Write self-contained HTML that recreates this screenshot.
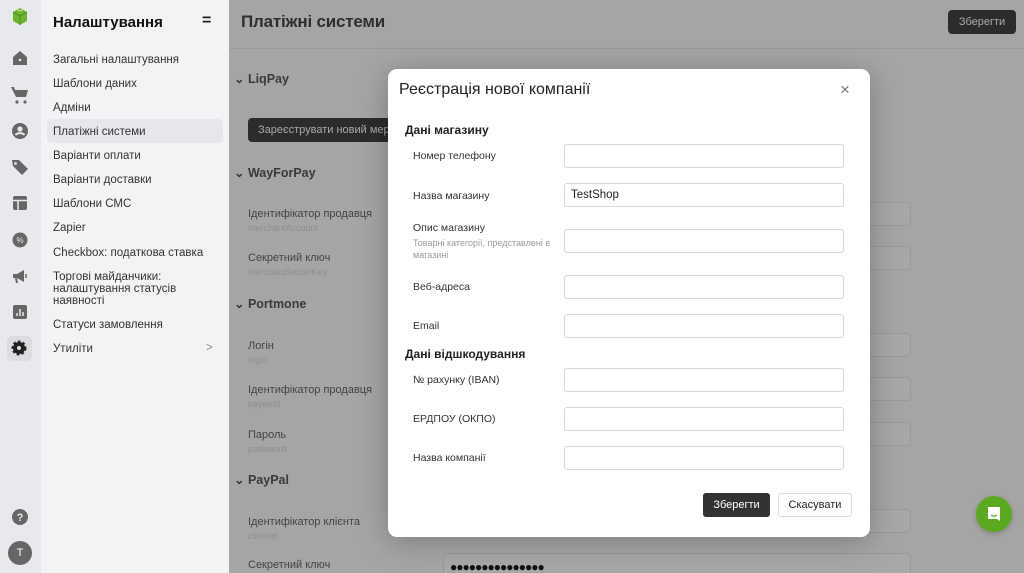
<!DOCTYPE html>
<html><head><meta charset="utf-8"><style>
*{box-sizing:border-box;margin:0;padding:0}
html,body{width:1024px;height:573px;overflow:hidden}
body{font-family:"Liberation Sans",sans-serif;position:relative;background:#a6a6a6;color:#222}
.rail{position:absolute;left:0;top:0;width:41px;height:573px;background:#e8e9ec}
.ic{position:absolute;left:9px;width:22px;height:22px;display:flex;align-items:center;justify-content:center}
.side{position:absolute;left:41px;top:0;width:188px;height:573px;background:#f2f3f5}
.side h1{position:absolute;left:12px;top:14px;font-size:15px;font-weight:bold;color:#111}
.side .eq{position:absolute;left:161px;top:12px;font-size:16px;font-weight:bold}
.it{position:absolute;left:12px;font-size:11.5px;color:#333;line-height:12px}
.sel{position:absolute;left:6px;top:119px;width:176px;height:24px;background:#e6e7ea;border-radius:5px}
.main{position:absolute;left:229px;top:0;width:795px;height:573px;background:#a5a5a5;overflow:hidden}
.t{position:absolute;font-size:11px;color:#444}
.s{position:absolute;font-size:9px;color:#8e8e8e}
.h{position:absolute;font-size:12.5px;font-weight:bold;color:#3a3a3a}
.bi{position:absolute;border:1px solid #999;border-radius:4px;height:24px;background:#a7a7a7}
.modal{position:absolute;left:388px;top:69px;width:482px;height:468px;background:#fff;border-radius:9px;box-shadow:0 4px 30px rgba(0,0,0,.25)}
.ml{position:absolute;left:25px;font-size:10.5px;color:#333}
.mi{position:absolute;left:176px;width:280px;height:24px;border:1px solid #d8d8d8;border-radius:3px;font-size:11.5px;padding:5px 6px;color:#222}
.sec{position:absolute;left:17px;font-size:12px;font-weight:bold;color:#222}
</style></head><body>
<div class="rail">
<svg class="ic" style="top:5px" viewBox="0 0 22 22"><path d="M4 7l7-4 7 4v9l-7 4-7-4z" fill="#6fb532"/><path d="M4 7l7 4 7-4M11 11v9" stroke="#4c8a1f" fill="none"/><path d="M7 4l4 2 4-2" stroke="#c8e89a" fill="none"/></svg>
<svg class="ic" style="top:47px" viewBox="0 0 22 22"><path d="M4 10l7-6 7 6v8H4z" fill="#666"/><circle cx="11" cy="13" r="1.3" fill="#e8e9ec"/></svg>
<svg class="ic" style="top:84px" viewBox="0 0 22 22"><path d="M2 3h3l1 3h13l-2 7H7z" fill="#666"/><circle cx="8" cy="18" r="1.6" fill="#666"/><circle cx="16" cy="18" r="1.6" fill="#666"/></svg>
<svg class="ic" style="top:120px" viewBox="0 0 22 22"><circle cx="11" cy="11" r="8" fill="#666"/><circle cx="11" cy="9" r="2.6" fill="#e8e9ec"/><path d="M6.5 15c2-2.5 7-2.5 9 0" stroke="#e8e9ec" stroke-width="2" fill="none"/></svg>
<svg class="ic" style="top:156px" viewBox="0 0 22 22"><path d="M3 4h7l9 9-6 6-9-9z" fill="#666"/><circle cx="6.5" cy="7.5" r="1.4" fill="#e8e9ec"/></svg>
<svg class="ic" style="top:192px" viewBox="0 0 22 22"><rect x="4" y="4" width="14" height="14" rx="2" fill="#666"/><path d="M4 8.5h14M9 8.5v10" stroke="#e8e9ec" stroke-width="1.5"/></svg>
<svg class="ic" style="top:229px" viewBox="0 0 22 22"><circle cx="11" cy="11" r="7.5" fill="#666"/><text x="11" y="14" font-size="8" text-anchor="middle" fill="#e8e9ec" font-family="Liberation Sans">%</text></svg>
<svg class="ic" style="top:265px" viewBox="0 0 22 22"><path d="M4 9h4l7-4v12l-7-4H4z M6 13l1 5h2l-1-5" fill="#666"/><path d="M17 9v4" stroke="#666" stroke-width="1.5"/></svg>
<svg class="ic" style="top:301px" viewBox="0 0 22 22"><rect x="4" y="4" width="14" height="14" rx="2" fill="#666"/><path d="M8 15v-3M11 15V8M14 15v-4" stroke="#e8e9ec" stroke-width="1.5"/></svg>
<div style="position:absolute;left:7px;top:336px;width:25px;height:25px;background:#dcdde1;border-radius:5px"></div>
<svg class="ic" style="top:337px;left:8px" viewBox="0 0 22 22"><circle cx="11" cy="11" r="6" fill="#222" stroke="#222" stroke-width="3" stroke-dasharray="2.5 2"/><circle cx="11" cy="11" r="2" fill="#dcdde1"/></svg>
<svg class="ic" style="top:506px" viewBox="0 0 22 22"><circle cx="11" cy="11" r="8" fill="#666"/><text x="11" y="15" font-size="11" font-weight="bold" text-anchor="middle" fill="#e8e9ec" font-family="Liberation Sans">?</text></svg>
<div style="position:absolute;left:8px;top:541px;width:24px;height:24px;border-radius:50%;background:#666;color:#fff;font-size:11px;text-align:center;line-height:24px">T</div>
</div>
<div class="side">
<h1>Налаштування</h1><div class="eq">=</div>
<div class="sel"></div>
<div class="it" style="top:54px">Загальні налаштування</div>
<div class="it" style="top:78px">Шаблони даних</div>
<div class="it" style="top:102px">Адміни</div>
<div class="it" style="top:126px">Платіжні системи</div>
<div class="it" style="top:150px">Варіанти оплати</div>
<div class="it" style="top:174px">Варіанти доставки</div>
<div class="it" style="top:198px">Шаблони СМС</div>
<div class="it" style="top:222px">Zapier</div>
<div class="it" style="top:247px">Checkbox: податкова ставка</div>
<div class="it" style="top:271px">Торгові майданчики:<br>налаштування статусів<br>наявності</div>
<div class="it" style="top:319px">Статуси замовлення</div>
<div class="it" style="top:343px">Утиліти</div>
<div class="it" style="top:342px;left:165px;color:#888">&gt;</div>
</div>
<div class="main">
<div style="position:absolute;left:12px;top:12px;font-size:17px;color:#2e2e2e;font-weight:bold;letter-spacing:-0.2px">Платіжні системи</div>
<div style="position:absolute;left:719px;top:10px;width:68px;height:24px;background:#2c2c2c;border-radius:4px;color:#aaa;font-size:11px;text-align:center;line-height:24px">Зберегти</div>
<div style="position:absolute;left:0;top:48px;width:795px;height:1px;background:#9a9a9a"></div>
<div class="h" style="left:5px;top:71px">⌄ LiqPay</div>
<div style="position:absolute;left:19px;top:118px;width:160px;height:24px;background:#2c2c2c;border-radius:4px;color:#aaa;font-size:11px;line-height:24px;padding-left:10px;white-space:nowrap;overflow:hidden">Зареєструвати новий мерчант</div>
<div class="h" style="left:5px;top:165px">⌄ WayForPay</div>
<div class="t" style="left:19px;top:208px">Ідентифікатор продавця</div><div class="s" style="left:19px;top:223px">merchantAccount</div>
<div class="t" style="left:19px;top:252px">Секретний ключ</div><div class="s" style="left:19px;top:267px">merchantSecretKey</div>
<div class="h" style="left:5px;top:296px">⌄ Portmone</div>
<div class="t" style="left:19px;top:340px">Логін</div><div class="s" style="left:19px;top:355px">login</div>
<div class="t" style="left:19px;top:384px">Ідентифікатор продавця</div><div class="s" style="left:19px;top:399px">payeeId</div>
<div class="t" style="left:19px;top:429px">Пароль</div><div class="s" style="left:19px;top:444px">password</div>
<div class="h" style="left:5px;top:472px">⌄ PayPal</div>
<div class="t" style="left:19px;top:516px">Ідентифікатор клієнта</div><div class="s" style="left:19px;top:531px">clientId</div>
<div class="t" style="left:19px;top:559px">Секретний ключ</div>
<div class="bi" style="left:600px;top:202px;width:82px"></div>
<div class="bi" style="left:600px;top:246px;width:82px"></div>
<div class="bi" style="left:600px;top:333px;width:82px"></div>
<div class="bi" style="left:600px;top:377px;width:82px"></div>
<div class="bi" style="left:600px;top:422px;width:82px"></div>
<div class="bi" style="left:600px;top:509px;width:82px"></div>
<div class="bi" style="left:214px;top:553px;width:468px;height:30px;font-size:12px;padding:6px 6px;color:#111;letter-spacing:-1px">●●●●●●●●●●●●●●●</div>
<div style="position:absolute;left:747px;top:496px;width:36px;height:36px;border-radius:50%;background:#5aa91f;box-shadow:0 2px 6px rgba(0,0,0,.2)"></div>
<svg style="position:absolute;left:756px;top:505px" width="18" height="18" viewBox="0 0 18 18"><path d="M3 2h12v14l-3-2H3z" fill="#fff"/><path d="M6 10c2 1.5 4 1.5 6 0" stroke="#5aa91f" stroke-width="1.3" fill="none"/></svg>
</div>
<div class="modal">
<div style="position:absolute;left:11px;top:12px;font-size:16px;color:#222">Реєстрація нової компанії</div>
<div style="position:absolute;left:452px;top:11px;font-size:17px;color:#777">×</div>
<div class="sec" style="top:54px">Дані магазину</div>
<div class="ml" style="top:81px">Номер телефону</div><div class="mi" style="top:75px"></div>
<div class="ml" style="top:121px">Назва магазину</div><div class="mi" style="top:114px">TestShop</div>
<div class="ml" style="top:153px">Опис магазину</div><div class="ml" style="top:168px;font-size:9px;color:#999;width:150px;line-height:12px">Товарні категорії, представлені в магазині</div><div class="mi" style="top:160px"></div>
<div class="ml" style="top:212px">Веб-адреса</div><div class="mi" style="top:206px"></div>
<div class="ml" style="top:251px">Email</div><div class="mi" style="top:245px"></div>
<div class="sec" style="top:278px">Дані відшкодування</div>
<div class="ml" style="top:305px">№ рахунку (IBAN)</div><div class="mi" style="top:299px"></div>
<div class="ml" style="top:344px">ЕРДПОУ (ОКПО)</div><div class="mi" style="top:338px"></div>
<div class="ml" style="top:383px">Назва компанії</div><div class="mi" style="top:377px"></div>
<div style="position:absolute;left:315px;top:424px;width:67px;height:24px;background:#333;border-radius:3px;color:#fff;font-size:11px;text-align:center;line-height:24px">Зберегти</div>
<div style="position:absolute;left:390px;top:424px;width:74px;height:24px;border:1px solid #ddd;border-radius:3px;color:#222;font-size:11px;text-align:center;line-height:22px">Скасувати</div>
</div>
</body></html>
